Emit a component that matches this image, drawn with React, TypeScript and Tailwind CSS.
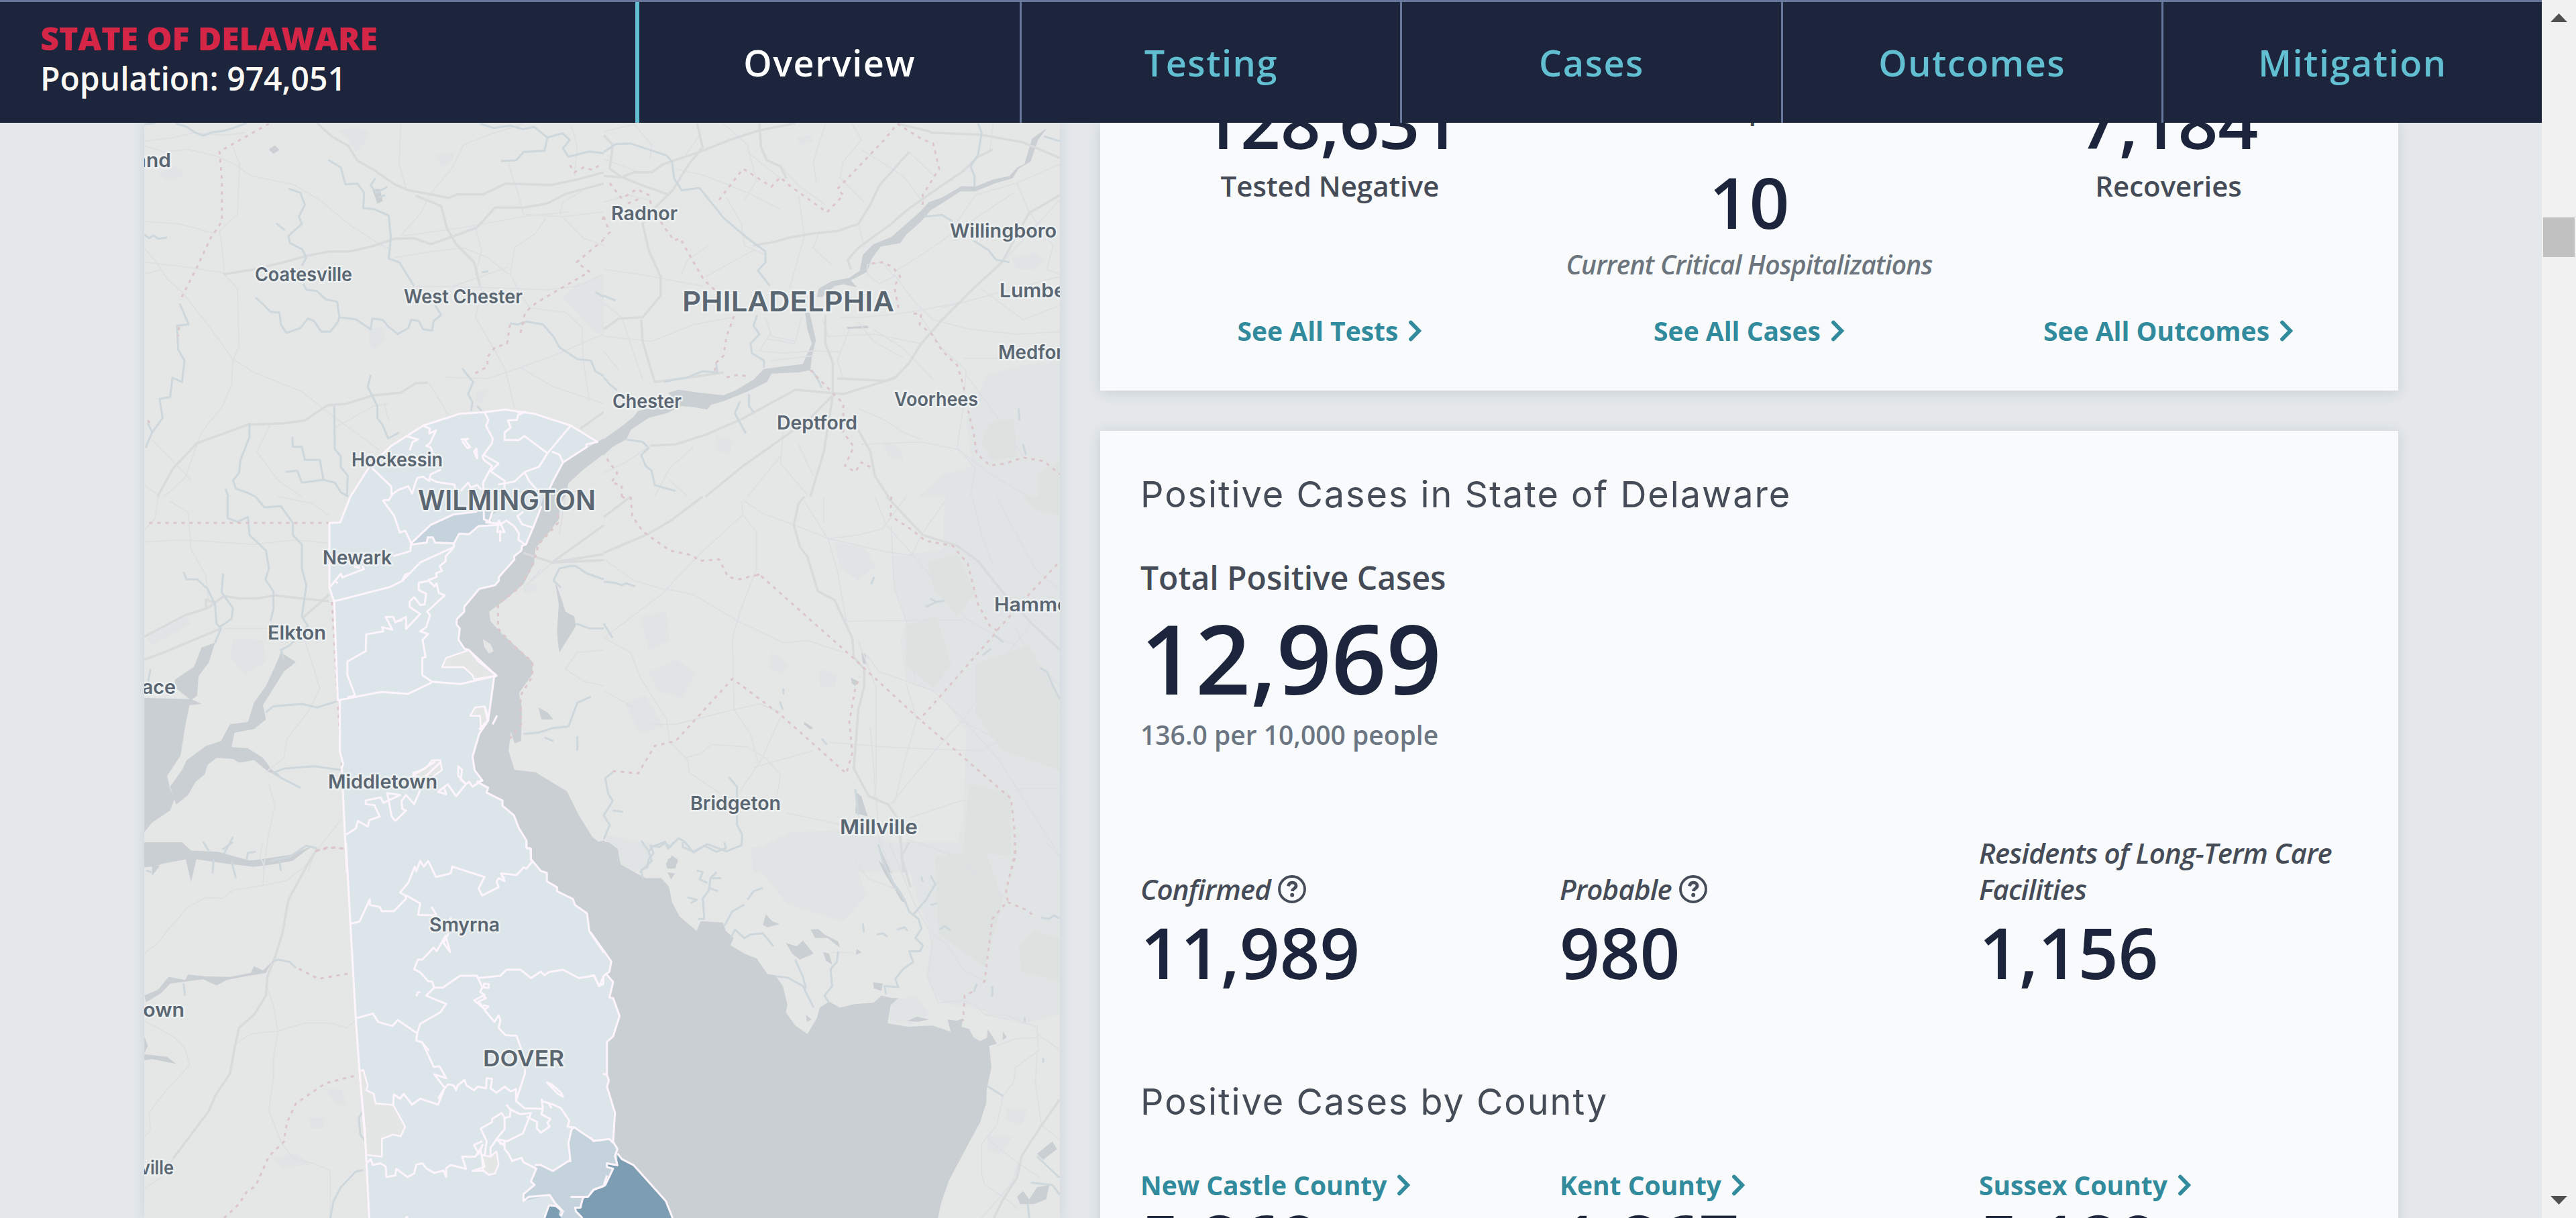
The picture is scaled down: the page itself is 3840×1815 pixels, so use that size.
import React from "react";

type Tile = "A" | "B" | "C" | "D" | "E" | "F";
type Shapes = Partial<Record<Tile, string[]>>;

/* The map is drawn in six tiles, each with its own grid of 1568 units. */
const TILES: Record<Tile, string> = {
  A: "translate(200 180) scale(0.446429 0.357143)",
  B: "translate(900 180) scale(0.446429 0.357143)",
  C: "translate(200 740) scale(0.446429 0.357143)",
  D: "translate(900 740) scale(0.446429 0.357143)",
  E: "translate(200 1255) scale(0.446429 0.357143)",
  F: "translate(880 1255) scale(0.459184 0.357143)",
};

const PARKS: Shapes = {
  A: [
    "M85 215 130 190 165 210 155 235 120 255 90 235Z",
    "M680 40 740 25 785 50 770 90 740 130 715 80Z",
    "M1430 740 1480 680 1568 650 1568 900 1520 860 1480 800Z",
    "M785 870 830 860 840 910 800 955 785 930Z",
    "M1010 140 1070 130 1065 165 1025 190Z",
    "M1140 1130 1180 1120 1165 1170 1140 1180Z",
  ],
  B: [
    "M1280 1060 1400 1020 1523 1000 1523 1568 1050 1568 1130 1480 1230 1440 1210 1250Z",
    "M1360 570 1440 550 1480 580 1440 620 1380 620Z",
    "M640 70 690 60 700 90 660 100Z",
    "M930 1340 990 1360 1000 1420 950 1400Z",
    "M370 1310 430 1330 420 1390 380 1380Z",
  ],
  C: [
    "M330 590 430 600 440 690 370 740 320 670Z",
    "M40 590 170 500 190 530 60 620Z",
    "M1300 370 1350 360 1340 400 1300 400Z",
  ],
  D: [
    "M1140 0 1523 0 1523 1568 1150 1568 1200 1350 1210 980 1120 820 1010 770 990 600 1010 520 970 390 960 250 1130 220Z",
    "M770 190 870 210 910 290 850 350 790 300Z",
    "M120 500 210 480 220 600 150 640Z",
    "M150 730 240 680 310 730 260 840 180 810Z",
    "M70 860 140 830 200 960 120 990Z",
    "M490 1480 620 1400 820 1390 1000 1450 1130 1500 1180 1568 500 1568Z",
    "M0 1410 120 1440 150 1480 110 1568 40 1568Z",
    "M560 650 620 700 600 740 550 720Z",
    "M720 720 780 740 770 800 720 790Z",
  ],
  E: [
    "M580 1150 640 1150 630 1195 590 1195Z",
    "M460 1320 540 1300 590 1345 500 1360Z",
    "M640 1030 690 1030 710 1100 670 1090Z",
  ],
  F: [
    "M520 20 720 0 860 100 900 220 820 330 640 260 560 130Z",
    "M1010 0 1523 0 1523 720 1400 760 1270 700 1140 670 1090 560 1110 400 1060 230Z",
    "M980 660 1060 640 1100 720 1040 760 970 745Z",
    "M60 0 200 0 180 110 100 110Z",
    "M1350 1110 1420 1110 1400 1180 1350 1160Z",
    "M1290 1220 1370 1230 1330 1300 1290 1290Z",
  ],
};

const DEEP_PARKS: Shapes = {
  B: ["M1290 1260 1370 1240 1380 1400 1300 1420 1260 1340Z", "M1450 1470 1523 1420 1523 1568 1450 1568Z"],
  D: [
    "M1400 0 1523 0 1523 80 1450 60Z",
    "M1010 540 1110 500 1160 700 1100 800 1010 700Z",
    "M1240 700 1420 620 1523 850 1523 1140 1330 1060 1240 900Z",
    "M1220 1200 1360 1240 1360 1500 1200 1480Z",
    "M1080 270 1180 240 1240 400 1180 500 1100 380Z",
  ],
  F: ["M1120 60 1280 30 1340 240 1280 520 1130 380Z", "M1390 430 1440 370 1523 400 1523 580 1400 540Z"],
};

const WATER: Shapes = {
  A: [
    "M1568 1325 1547 1340 1432 1425 1402 1495 1380 1568 1440 1568 1450 1512 1500 1455 1568 1390Z",
    "M450 120 470 102 485 122 465 138Z",
    "M795 285 820 285 830 335 812 345Z",
  ],
  B: [
    "M-2 1330 60 1275 100 1235 115 1210 200 1185 240 1165 215 1135 250 1122 320 1135 400 1145 440 1125 500 1080 535 1035 600 1025 665 1015 675 985 695 930 680 870 672 800 688 800 708 915 695 985 690 1040 650 1050 560 1055 545 1090 480 1130 400 1170 358 1185 345 1205 300 1195 260 1190 210 1220 150 1240 90 1290 75 1330 30 1360 -2 1397Z",
    "M712 735 718 700 760 670 820 655 855 625 865 560 900 515 960 485 1060 375 1085 340 1130 320 1195 272 1240 275 1300 245 1355 230 1380 195 1405 180 1430 75 1480 30 1450 80 1425 170 1385 200 1365 240 1310 260 1240 295 1190 295 1160 320 1090 375 1060 420 1010 475 990 510 925 525 895 575 880 630 825 665 845 695 800 682 770 690 730 735Z",
    "M810 860 880 855 885 865 815 868Z",
  ],
  C: [
    "M1300 -2 1440 -2 1420 40 1420 90 1385 150 1340 215 1335 280 1300 365 1240 430 1185 480 1190 520 1230 575 1270 620 1330 690 1330 740 1285 820 1295 880 1292 1020 1270 1030 1258 980 1250 1060 1270 1140 1340 1150 1445 1230 1485 1330 1530 1420 1550 1440 1570 1435 1570 1570 1300 1570 1050 1200 1000 600Z",
    "M34 840 190 845 225 865 185 870 170 960 155 1080 110 1165 120 1220 135 1260 120 1310 60 1360 34 1400Z",
    "M135 765 200 710 225 630 270 610 250 690 215 750 210 830 190 850 140 800Z",
    "M490 650 540 690 500 730 470 790 430 870 440 930 400 970 335 985 325 1045 380 1050 430 1090 460 1140 490 1165 450 1150 400 1100 350 1110 330 1095 275 1090 245 1120 235 1160 205 1190 180 1245 140 1285 120 1210 160 1140 175 1100 240 1040 290 1020 320 950 380 940 400 860 440 790 470 710Z",
    "M1405 350 1425 420 1440 480 1470 500 1475 540 1450 590 1420 650 1415 610 1412 560 1418 450Z",
    "M34 1445 160 1445 190 1480 280 1500 380 1520 440 1510 520 1495 600 1455 570 1480 530 1520 460 1535 400 1545 300 1530 190 1510 100 1530 34 1545Z",
    "M1350 880 1380 900 1400 930 1360 930Z",
  ],
  D: [
    "M-2 1435 30 1460 50 1500 60 1550 80 1570 -2 1570Z",
    "M845 1235 860 1250 882 1335 840 1320Z",
    "M215 1510 245 1510 240 1550 210 1545Z",
    "M860 650 875 660 875 700 865 695Z",
    "M670 940 700 965 690 972 668 950Z",
    "M920 1460 945 1530 965 1570 940 1570Z",
    "M825 755 848 770 840 790 828 780Z",
  ],
  E: [
    "M1200 0 1570 0 1570 1570 1400 1570Z",
    "M34 0 160 0 190 35 280 40 380 75 450 80 400 98 290 75 205 60 150 60 75 100 34 104Z",
    "M60 95 85 100 60 140Z",
    "M170 60 210 60 190 165Z",
    "M34 640 80 615 115 562 170 575 180 552 240 560 320 562 390 545 400 518 430 535 460 500 440 545 370 560 310 575 275 598 230 572 120 590 90 630 40 668Z",
    "M34 810 46 850 34 880Z",
    "M34 885 110 895 140 925 60 905 34 910Z",
  ],
  F: [
    "M-2 -2 60 0 90 30 95 90 150 130 180 150 230 150 255 185 265 250 290 310 345 370 358 330 430 335 440 370 465 400 455 430 500 465 540 485 575 550 600 555 625 600 640 680 635 710 665 765 705 800 735 735 745 690 775 665 810 690 860 675 920 670 945 640 980 650 1000 650 975 680 965 755 1030 770 1110 765 1170 790 1160 740 1190 745 1210 735 1205 770 1230 780 1245 815 1265 830 1288 815 1290 780 1320 840 1295 850 1302 940 1287 1030 1285 1090 1265 1170 1210 1300 1165 1410 1140 1500 1128 1570 -2 1570Z",
    "M245 90 265 55 285 75 275 110 250 110Z",
    "M250 125 275 130 262 155Z",
    "M560 345 570 300 590 330 615 342 575 355Z",
    "M635 420 670 435 690 410 725 465 680 490 655 465Z",
    "M715 365 740 362 760 385 805 415 810 440 770 400 730 400Z",
    "M755 458 775 465 785 510 765 495Z",
    "M918 585 950 590 945 620 920 610Z",
    "M935 75 965 110 985 165 1010 210 1030 260 1010 245 980 180 955 130Z",
    "M1450 1300 1500 1248 1515 1280 1470 1325Z",
    "M1385 1480 1405 1455 1425 1490 1450 1440 1490 1430 1480 1490 1440 1510 1395 1510Z",
    "M1340 790 1352 815 1338 825Z",
    "M865 445 880 460 862 470Z",
    "M700 720 718 740 703 750Z",
    "M1030 745 1060 728 1100 740 1060 750Z",
  ],
};

const RIVERS: Shapes = {
  A: [
    "M34 15 70 10M140 12 175 25 205 50 230 62 260 48 300 42 330 30 375 10",
    "M515 283 555 300 570 350 550 400 560 430 515 480 520 510 560 535 575 570 560 605",
    "M648 163 690 195 705 265 745 262 768 300 765 365 800 368 850 395 857 490 850 575 885 590 910 640 935 690",
    "M805 240 790 270 810 300 845 275M815 320 838 310",
    "M475 428 503 457M34 475 50 490 65 478 80 492 110 487",
    "M405 737 430 765 455 797 485 800 490 850 508 885 555 865 580 825 600 835 625 880 655 880 680 840 685 820 740 828 790 870 795 825 830 830 850 860 880 890 915 865 925 830 950 835 965 870 995 875 1000 835 1025 810 1005 770",
    "M565 680 575 705 610 710 640 745 678 755 685 820",
    "M152 763 182 850 143 855 147 955 168 1000 160 1090 128 1072 120 1153 85 1160 95 1240 60 1300 45 1260M60 1300 38 1365",
    "M385 1260 385 1320 355 1415 350 1470 330 1500 340 1535 375 1550 405 1568",
    "M528 1320 530 1360 560 1360 570 1415 620 1415 632 1498 560 1510 545 1460 505 1465M632 1498 670 1510 690 1550 715 1568",
    "M668 1190 670 1370 690 1400 690 1445 713 1480 710 1568",
    "M790 1060 780 1110 812 1190 812 1240 830 1270 848 1325 885 1300",
    "M1095 1033 1132 1090 1115 1140 1130 1175 1125 1210M1145 1190 1160 1210",
    "M1255 845 1280 850 1310 838 1365 850 1400 900 1420 945 1480 995 1525 1000 1540 1045 1568 1065",
    "M1155 12 1200 30 1255 20 1300 35 1335 25 1380 70 1430 52 1455 80 1432 115 1450 150 1520 128 1568 135M1380 70 1370 125 1300 130 1275 165 1225 168",
    "M305 1535 315 1568M1540 715 1568 735M1160 632 1182 628",
  ],
  B: [
    "M0 130 40 97 90 95 150 120 210 145 228 170 235 240 260 290 320 280",
    "M320 280 400 405 480 490 540 545 540 590 515 625 555 690",
    "M512 810 500 855 520 890 490 930 495 970 535 1000 535 1030",
    "M1250 12 1262 50 1250 140 1225 190 1238 230 1238 275",
    "M1070 400 1130 393 1165 420M1235 500 1285 540 1310 580 1355 590",
    "M0 1070 20 1100 45 1125M75 1330 130 1340 150 1365 125 1395 140 1440 160 1460 170 1520 240 1545",
    "M455 1170 438 1220 455 1260 475 1305M485 1140 485 1190 500 1215",
    "M1385 1200 1388 1250M0 730 40 750M1400 1350 1410 1395M375 1010 380 1050 330 1045 280 1070 200 1090",
    "M695 1040 715 1080 728 1115M1470 65 1523 85",
  ],
  C: [
    "M312 0 312 90 345 105 380 85 385 160 440 225 450 300 438 345 465 395 465 470 455 520",
    "M405 0 435 45 490 40 530 110 530 160 560 200 560 300 575 370 560 500 580 540 520 620 490 640 500 680",
    "M165 315 175 345 210 345 245 385 270 450 275 530 290 550 270 610M297 320 292 400 330 465 325 510 285 545",
    "M55 720 45 780M440 900 465 875 560 865 610 880 675 855M470 1150 500 1135 600 1125 690 1140M460 1150 500 1180 555 1215",
    "M1455 290 1475 290 1510 320 1568 345M1455 290 1420 300 1400 350 1425 380M1475 530 1520 550 1568 550",
    "M1450 960 1480 860 1525 835M1300 990 1350 985 1400 965 1450 960M1370 1005 1400 1020M1480 1000 1480 1060M230 1440 250 1480M330 1420 300 1490M40 1560 60 1568",
  ],
  D: [
    "M0 355 40 360 60 370 75 362 105 375M0 530 30 590M1458 715 1480 730 1500 790 1523 845",
    "M1075 460 1110 440 1090 425M1110 440 1138 435M1300 575 1335 608M1265 662 1293 635M903 335 893 365",
    "M600 800 600 825M588 855 598 890M728 1010 745 1035M417 1170 445 1210 445 1370 462 1410 460 1455 410 1480 345 1450 300 1485 270 1440 250 1425 215 1470 205 1440 165 1460 150 1480 125 1435",
    "M150 1480 160 1520 120 1568M30 1150 5 1175 15 1240 30 1270 0 1330 20 1370 0 1430M30 1310 65 1315M840 1220 850 1330",
  ],
  E: [
    "M450 80 520 60 575 15 610 25M265 70 262 130M325 80 340 150M485 80 490 120M375 75 380 45 405 40M295 30 330 0M460 500 480 490 520 500 540 525",
    "M165 590 170 640M770 1070 770 1105 800 1100M770 1110 750 1150 755 1220 790 1275M765 1368 740 1375 690 1440 665 1500 655 1568",
  ],
  F: [
    "M300 0 300 20 335 40 370 15 410 40 440 25 435 0M270 0 260 18 240 5 225 20 195 15 205 45 190 70 185 105 165 115 170 150",
    "M345 118 365 125 355 155 380 170M410 125 390 150 385 200 365 235 370 320 350 320M390 150 425 150M385 190 415 205M315 230 345 240 325 255",
    "M435 350 460 290 500 260M510 240 530 205 560 190M455 400 470 365 500 400 520 385 560 380 595 435",
    "M935 10 950 80 985 175 1020 240 1035 290 1065 320 1075 360 1055 400 1080 430 1070 455 1035 455 1048 500 1015 530 990 570 1000 605 955 600 960 635",
    "M1050 300 1090 240 1120 175 1105 140M995 365 1020 355 1030 370M1133 365 1150 350 1170 368M1462 315 1490 320 1505 305 1523 318M930 385 950 380 965 395M885 340 888 375",
    "M600 560 640 565 690 600 705 640 725 690M665 490 690 560 700 610M805 455 800 500 780 530 785 600 760 640 775 670",
    "M1255 590 1245 625M1305 600 1305 645M1410 730 1410 750M1470 900 1470 920M1450 1310 1490 1360 1523 1400M1430 1420 1500 1430 1523 1470M1420 1510 1425 1568M1290 1018 1340 1060",
    "M1075 145 1080 165M1105 262 1125 255",
  ],
};

const ROADS: Shapes = {
  A: [
    "M610 8 660 65 715 105 745 165 800 205 870 265 915 290 1005 310 1050 322 1080 307 1165 307 1240 262 1390 268 1480 245 1568 215",
    "M300 640 400 620 500 590 570 565 655 545 720 545 790 525 870 492 935 490 990 515 1060 485 1145 445 1205 362 1300 362 1380 345 1440 305 1568 262",
    "M940 312 1025 355 1045 450 1075 515 1135 590 1155 690",
    "M78 1568 130 1450 210 1345 380 1268 500 1262 570 1250 645 1187 710 1180 800 1145 890 1135 940 1095 980 1093",
    "M1568 1215 1490 1285",
  ],
  B: [
    "M0 230 60 235 100 215 160 215 200 180 320 130 420 80 520 40 640 10M312 12 330 110 285 180 230 290 165 370 130 430 150 540 190 650 190 730 130 820 50 825 0 870",
    "M520 12 525 110 545 165 590 190 610 240M1090 50 1260 58 1400 90 1523 155M980 12 1090 45M1300 120 1250 150 1200 210 1100 295 1010 375 960 430 850 530 815 580 825 620",
    "M500 520 570 505 620 487 700 470 780 460 850 430 890 350 920 270 1020 130",
    "M1523 310 1420 385 1330 590 1230 705 1130 830 1060 930 1020 1010 970 1075 800 1140 640 1122 460 1245 340 1310 240 1350 155 1355",
    "M340 1568 460 1445 590 1330 690 1240 765 1145M125 830 130 920 170 1090 290 1070 400 1050M850 1290 890 1380 905 1480 950 1568M740 810 740 930 765 1010 765 1140",
    "M765 1145 735 1380 690 1568M0 60 30 100 20 200 60 235 130 270 220 310M780 1075 860 1080 940 1085 980 1065",
  ],
  C: [
    "M34 585 170 495 245 465 300 415 350 425 410 425 470 412 560 425 650 437",
    "M240 465 240 430 275 445M34 680 100 650 290 550M1300 235 1395 275 1568 120M1395 275 1568 240M1395 275 1568 265M560 510 650 410",
  ],
  D: [
    "M0 235 150 155 230 95 330 0M0 85 90 0M670 0 650 30 635 120 655 210 680 250 715 395 770 430 830 590 835 670 870 720 870 790 850 890 835 1135 885 1250 950 1285 985 1350 1000 1568",
    "M945 0 1065 160 1180 205 1250 270 1330 395 1430 530 1523 640",
  ],
  E: ["M610 30 580 90 515 240 495 380 470 480 445 560 440 640 400 720 350 775 335 860 320 965 270 1060 250 1120 130 1320"],
  F: ["M1035 0 1010 60 1040 190M1523 1075 1460 1190 1400 1310 1385 1400 1340 1490 1310 1568"],
};

const LANES: Shapes = {
  A: [
    "M34 85 130 70 200 50 300 60 370 50M34 105 100 130 180 120 270 145 340 185 390 230 530 265 620 330 720 435 820 515 860 540",
    "M330 110 352 180 345 390 285 460 295 540 300 640 345 700 350 940 330 1000 325 1100 295 1190 225 1300 190 1420 170 1490 100 1568",
    "M34 420 150 430 270 470M34 530 80 600 110 660 160 715 240 840 330 995 400 1050 560 1130 640 1210 750 1310 820 1375",
    "M34 590 160 607 300 635M34 640 90 620M890 12 885 180 910 290M1300 12 1180 60 1100 100 1060 200 985 310 960 380 890 480",
    "M1275 270 1300 390 1430 400 1568 380M1250 180 1275 280M1375 405 1340 470 1270 530 1255 640 1290 720 1320 780 1440 800 1495 860 1500 1000 1520 1170",
    "M870 570 1000 545 1100 530 1180 570 1250 640M900 480 1100 445 1300 400 1450 380M1140 450 1160 540 1140 640 1160 700 1140 820 1200 950 1240 1040 1270 1200",
    "M940 690 1150 695 1380 705 1480 690 1568 640M1065 690 1250 610M1040 1070 1180 1075 1290 1030 1420 970 1568 890M1290 1030 1400 1110 1568 1180",
    "M985 1095 1050 1230M455 1265 410 1380 480 1500 560 1568M670 1280 800 1190 850 1180M60 1330 190 1500M34 1520 80 1560M835 1180 850 1250M1470 230 1480 110 1460 20M1420 400 1430 340 1500 290M1430 400 1500 490 1568 520",
  ],
  B: [
    "M100 12 160 100 155 160M0 160 110 210M0 45 110 12M240 200 340 230 480 300 590 370M270 150 320 60M740 12 700 170 710 260M590 190 650 270 740 350M830 12 860 80 800 170 790 240 870 340",
    "M860 120 1000 230 1060 330M1020 130 1110 240M1300 12 1290 120M1523 180 1380 260 1240 310 1170 440M1523 330 1330 590",
    "M970 630 1060 560 1200 440 1370 300M880 640 920 680 970 650 930 590 880 600 880 640M970 640 1040 760 1100 830 1220 870 1380 890 1523 880",
    "M1060 820 1130 950 1210 1040 1200 1200 1180 1360 1240 1450 1225 1568M1200 990 1523 992M1380 260 1420 380 1500 520 1480 620 1523 640M1130 780 1523 650M1523 770 1400 830 1260 700",
    "M0 620 120 640 200 660 330 690M340 650 500 540M260 640 280 580 350 520M540 820 560 900 640 920 660 820M545 910 640 930M560 880 520 960 600 970 700 960 790 965",
    "M730 830 750 900 900 890 1060 930M790 820 860 820 1020 800 1180 760M900 870 1000 950 1100 1080M560 1000 700 980M820 870 780 1000 800 1080",
    "M0 760 60 820 130 1080M0 900 160 920 300 850 430 820M0 960 50 1040M590 1400 480 1568M650 1350 700 1480M170 1568 220 1450 300 1360M600 1290 590 1430 680 1560M220 1500 280 1568",
    "M860 1350 1060 1340 1180 1370 1300 1480 1420 1568M850 1200 940 1250 1000 1300 1060 1330M0 1470 80 1420 150 1360M410 320 460 430 470 520 540 560M650 310 670 480 620 700M480 130 600 250M0 340 80 310 150 330",
    "M400 12 480 100 510 250 470 330M720 460 700 530 760 600M850 430 870 530M1210 1060 1310 1230 1400 1400M1000 990 900 920 850 840",
  ],
  C: [
    "M80 0 70 90 34 140M34 190 160 180 400 200 540 180 650 195M120 20 180 65 190 220 240 330 250 450M480 0 600 30 650 80",
    "M300 550 430 550 560 560 620 800 580 900 510 1010 500 1090 440 1150M430 1568 450 1400 470 1290 450 1200M610 1475 690 1350M1395 275 1310 370 1360 300M1420 160 1440 0M1568 640 1480 650 1440 720 1500 770 1568 790M580 1568 600 1490",
  ],
  D: [
    "M0 260 100 350 210 390 190 410 0 590M210 385 320 240 465 75 460 20M465 75 510 150 510 300 455 480 430 590 435 890 490 990 515 1110",
    "M465 15 530 70 640 120 750 175 850 160 930 135 1010 0M750 175 940 230 1030 245M670 20 750 180 780 310 810 520 1200 515M735 0 735 110",
    "M210 385 300 410 450 520 600 610 680 600 800 650M0 590 90 650 120 750 210 930 220 1020 280 1100 285 1150 390 1240M0 810 100 880",
    "M160 950 240 950 430 890 520 865 590 900M270 1090 320 1075 360 1035 480 1045 540 1090 590 1160 580 1240M590 920 530 1090 455 1230M500 1130 700 1060M750 1025 940 1045 1120 1055 1260 1060 1523 890",
    "M905 0 945 120 1030 240 1210 510 1370 620 1523 790M1150 0 1060 160 1030 240M1230 0 1260 150 1300 290M1310 0 1440 300 1523 390M960 120 970 380 1010 520 1040 760M870 650 920 730 1100 810 1200 930 1320 1100 1523 1500",
    "M1430 530 1370 620 1200 930 1120 1040 960 1280M1010 780 1045 930 1010 1080 970 1280M850 600 910 800 910 1200 900 1270M610 1320 800 1370M1020 1340 1190 1270 1310 1260M1200 940 1523 1140M1370 540 1500 830M1010 1430 1150 1490 1250 1568M1380 1220 1523 1220M890 960 920 1430 960 1568",
  ],
  E: [
    "M34 465 80 420 110 370 180 270 240 230 295 235 330 200 430 180 510 160 580 90M430 0 420 60 435 100 430 180M445 610 465 680 480 790 465 900 465 980 450 1120 490 1250 530 1320 600 1340 655 1370 655 1568",
    "M340 840 390 800 480 788 570 755 660 755 710 775 740 740M34 745 130 810 170 860 185 930 90 1060 50 1130 55 1200 34 1230M34 1445 90 1400 130 1320",
  ],
  F: [
    "M970 0 1050 250 1100 370 1110 430 1095 560 1130 670M1070 0 1180 60 1350 235M1110 380 1160 430 1210 530 1280 580M1130 670 1210 660 1250 680 1280 720 1350 720 1400 750 1450 770 1455 870 1380 940 1375 1000 1340 1060 1320 1180 1270 1260 1270 1380 1280 1430 1340 1480 1390 1530",
    "M1450 800 1523 865M1450 870 1445 1010 1465 1180 1523 1240M1290 1240 1390 1340 1370 1420 1270 1568M1390 1340 1460 1400M1480 0 1523 60M860 80 900 150 1000 200M1320 850 1380 820 1450 815M1280 720 1360 740M780 460 850 460",
  ],
};

const BORDERS: Shapes = {
  A: [
    "M450 12 285 128 293 250 293 420 255 490 210 610 155 745",
    "M1568 495 1478 590 1520 630 1430 695 1340 762 1305 800 1300 835 1290 885M1255 850 1245 930 1205 945 1180 985 1180 1025 1130 1060",
    "M1455 185 1470 215 1500 195 1530 205 1560 180M1568 400 1560 420M150 860 147 900M45 1250 60 1270",
  ],
  B: [
    "M20 260 60 325 110 285 150 310 160 360 200 440 235 500 255 490 300 590 335 665 370 705M80 345 130 320M0 400 20 465 0 490",
    "M385 330 465 200 560 275 590 235 620 270 745 382 800 310 780 285 940 75 980 12 1060 75 1100 95 1120 200 1065 310 1065 350",
    "M435 815 410 900 400 980 375 1010 370 1050M410 1070 450 1060 490 1068M895 595 930 590 965 610 990 650 970 690 985 790M1035 805 1060 805 1055 850 1095 890 1130 960 1180 1020 1200 1100 1215 1200 1235 1300 1245 1390 1290 1438 1340 1430 1400 1405 1470 1420 1523 1475",
    "M690 1040 760 1130 800 1180 800 1300 835 1360 805 1440 840 1465 860 1425 890 1445M10 1410 45 1470 25 1510 60 1520 60 1568",
  ],
  C: ["M50 110 652 110M660 440 680 860 700 1250 710 1568M1415 40 1415 110 1350 200 1330 290 1285 380 1215 450 1215 550 1265 620 1330 690 1330 750 1290 830 1292 950 1255 1010M605 1480 650 1465 705 1468"],
  D: [
    "M90 0 95 80 130 145 220 225 295 245 320 268 385 262 415 335 450 345 520 325 830 670 1055 930 1360 1260 1372 1400 1375 1500 1358 1568M520 325 500 330",
    "M30 1145 115 1155 170 1040 240 1020 430 760 590 910 810 1155 830 1070 820 940 840 800 855 750M960 0 958 80 1030 140 1075 185 1165 205 1215 280 1250 450 1290 540 1315 560 1055 930M1315 555 1370 480M1415 415 1523 270M60 0 70 5",
  ],
  E: ["M610 35 650 20 705 28M550 528 615 570 730 545M300 1568 350 1510 375 1460 405 1435 450 1310 500 1250 510 1170 540 1090 640 1005 745 972M752 960 770 1200 785 1568"],
  F: ["M1378 0 1378 50 1350 200 1355 245 1305 320 1280 580 1265 600M1355 250 1420 285 1445 315M1240 625 1215 640 1210 745"],
};

const STATE: Shapes = {
  A: ["M722 1570 782 1450 830 1390 860 1355 965 1272 1088 1222 1170 1216 1238 1205 1335 1222 1458 1272 1547 1340 1510 1362 1432 1425 1402 1495 1385 1540 1368 1570Z"],
  C: ["M724 -4 688 108 652 110 652 380 668 440 680 850 687 852 687 1065 698 1115 693 1130 710 1570 1325 1570 1325 1470 1310 1465 1310 1435 1285 1385 1268 1330 1230 1290 1230 1268 1177 1235 1182 1215 1145 1190 1163 1185 1137 1142 1130 1085 1152 990 1182 935 1202 752 1210 747 1152 690 1118 640 1103 635 1083 597 1087 550 1077 535 1077 512 1102 480 1102 460 1152 385 1205 370 1218 350 1218 335 1270 262 1268 250 1293 225 1295 205 1308 200 1332 130 1355 50 1368 -4Z"],
  E: ["M706 -4 722 340 740 735 752 950 770 1200 785 1570 1570 1570 1570 460 1520 372 1512 297 1472 262 1465 237 1412 205 1412 188 1378 163 1378 128 1358 120 1330 78 1323 25 1310 25 1310 -4Z"],
  F: ["M-2 372 68 497 62 540 52 550 74 583 62 648 74 650 95 725 74 810 54 833 54 970 60 995 54 1020 80 1130 74 1250 88 1300 80 1400 -2 1500Z"],
};

const MEDIUM: Shapes = {
  C: ["M925 195 990 118 1065 75 1145 62 1215 60 1190 80 1195 105 1212 118 1150 123 1118 157 1085 157 1068 195 1005 192 997 170 980 170 977 190 925 200Z"],
  E: ["M1470 1187 1535 1245 1570 1242 1570 1435 1535 1450 1515 1480 1498 1482 1490 1525 1472 1530 1497 1570 1428 1570 1425 1560 1432 1540 1387 1472 1300 1497 1300 1468 1337 1430 1325 1415 1343 1362 1338 1347 1362 1347 1398 1372 1458 1325 1450 1255 1460 1200Z"],
  F: ["M-2 1230 10 1247 62 1238 74 1255 88 1280 88 1348 54 1340 54 1355 74 1362 48 1432 10 1450 -2 1465Z"],
};

const DARK: Shapes = {
  E: ["M1570 1433 1535 1450 1500 1490 1490 1525 1472 1530 1497 1570 1570 1570Z", "M1385 1515 1408 1518 1422 1535 1418 1555 1428 1570 1370 1570Z"],
  F: ["M88 1300 102 1322 140 1347 245 1497 267 1570 -2 1570 -2 1465 10 1450 48 1432 74 1362 54 1355 54 1340 88 1348Z"],
};

const HOLES: Shapes = {
  C: [
    "M1118 640 1210 747 1135 762 1130 745 1100 712 1028 712 1042 673Z",
    "M1138 880 1170 875 1180 935 1158 970 1155 915 1122 915Z",
    "M995 1100 1022 1100 1028 1140 985 1180 932 1165 932 1153 972 1135Z",
  ],
  E: [
    "M752 955 765 950 780 1015 775 1035 800 1050 806 1090 865 1096 905 1187 890 1227 865 1220 827 1238 827 1312 775 1305Z",
    "M1160 1305 1190 1312 1210 1290 1217 1345 1205 1382 1185 1388 1165 1370Z",
  ],
};

const ZONES: Shapes = {
  A: [
    "M722 1568 782 1450 830 1390 860 1355 965 1272 1088 1222 1170 1216 1238 1205 1335 1222 1458 1272 1547 1340 1510 1350 1510 1362 1432 1425 1402 1495 1385 1540",
    "M965 1272 988 1285 985 1305 1008 1292 988 1345 975 1357 990 1362 1000 1395",
    "M1170 1216 1183 1248 1175 1273 1197 1325 1195 1345 1163 1400 1168 1415 1195 1440 1183 1468 1165 1510 1168 1568",
    "M1278 1217 1305 1215 1282 1228 1278 1248 1248 1250 1257 1280 1237 1300 1237 1332 1285 1332 1303 1315 1380 1387 1352 1443 1305 1465 1270 1505 1215 1518",
    "M1458 1272 1405 1350 1380 1387M1395 1380 1420 1393 1432 1425M1168 1395 1217 1430 1190 1462 1238 1503 1235 1545M1303 1465 1320 1505 1345 1540",
    "M795 1450 858 1525 860 1568M860 1560 882 1540 915 1525 928 1555 945 1490 965 1485 985 1503 990 1475 1025 1455M990 1495 1010 1507 1070 1518 1072 1555",
    "M908 1315 948 1330 930 1340 920 1375M1090 1330 1115 1327 1105 1335 1122 1362 1112 1365 1095 1335M1135 1380 1143 1368 1145 1408ZM1090 1545 1115 1510 1125 1530 1145 1520 1160 1540",
  ],
  C: [
    "M722 0 688 108 652 110 652 380 668 440 680 850 687 852 687 1065 698 1115 693 1130 710 1568",
    "M1360 40 1332 130 1308 200 1295 205 1293 225 1268 250 1270 262 1218 335 1218 350 1205 370 1152 385 1102 460 1102 480 1077 512 1077 535 1087 550 1083 597 1103 635 1118 640 1152 690 1210 747 1202 752 1182 935 1152 990 1130 1085 1137 1142 1163 1185 1145 1190 1182 1215 1177 1235 1230 1268 1230 1290 1268 1330 1285 1385 1310 1435 1310 1465 1325 1470 1325 1520",
    "M830 15 850 15 858 0M830 15 868 80 887 150 905 142 925 195 922 228 865 248",
    "M925 195 990 118 1065 75 1145 62M925 200 977 192 980 170 997 170 1005 192 1068 195 1068 210 955 275 895 352 855 377 668 437",
    "M1068 195 1085 155 1118 157 1150 123 1212 118 1218 100 1237 148 1212 148 1218 100M1222 140 1222 188M1167 55 1168 95 1190 105 1175 108 1212 112",
    "M1218 120 1243 100 1270 125 1285 155 1283 180 1305 200M1300 62 1280 82 1295 115 1332 130M1197 60 1185 105",
    "M652 380 690 322 695 337 767 303 762 288M735 292 755 298M670 350 680 362",
    "M1065 215 1040 250 1040 270 1020 290 1028 310 1008 320 1010 335 980 350M895 350 905 325 918 320",
    "M980 347 1003 375 1010 362 1017 402 1037 412 978 480 988 495 975 545 955 562 982 573 963 598 973 670 962 672 962 745 992 770 990 778 915 823 825 815 680 850M712 838 738 830 712 745 712 688 773 645 775 575 832 562 828 545 862 555 840 502 865 502 872 525 908 502 908 552 955 490 920 460 920 438 935 420 955 452 970 450 975 405 950 390 950 360 980 352",
    "M872 522 895 515M992 772 1090 782 1210 747M1182 920 1170 875M1152 972 1180 935M1212 913 1197 950",
    "M1160 1185 1130 1210 1118 1190 1108 1200 1082 1165 1082 1125 1095 1140 1090 1180 1108 1200 1075 1250 1047 1200 1015 1232 1042 1242 1035 1215M955 1225 935 1283 908 1245 893 1270 895 1303 908 1310 872 1353 860 1335 845 1237 888 1245 832 1278 823 1255 773 1268 773 1283 802 1287 820 1335 785 1350 780 1377 747 1353 740 1385 708 1410",
    "M932 1163 1005 1105M972 1168 1022 1110",
  ],
  E: [
    "M707 0 722 340 740 735 752 950 770 1200 785 1568",
    "M1310 0 1310 25 1323 25 1325 70 1330 78 1358 120 1378 128 1378 163 1412 188 1412 205 1465 237 1472 262 1512 297 1520 372 1568 460",
    "M722 340 752 332 787 238 787 262 820 270 827 288 867 288 908 235 905 222 888 210 915 170 937 102 942 122 955 78 967 102 982 78 1008 145 1057 130 1062 102 1170 145 1150 193 1162 222 1217 188 1210 165 1217 150 1237 162 1225 130 1277 137 1300 105 1310 110 1330 80M1225 140 1237 150",
    "M908 222 955 255 948 303 1010 305 993 270M1045 330 1060 315M1050 380 1033 420 1055 458 1040 390 1010 455 1000 440 962 490 947 490 935 530 955 543 982 580 995 582 1002 607 975 640 1042 675 1022 710 955 758 945 797 880 742 862 767 815 750 797 715 740 735",
    "M1002 607 1030 607 1088 557 1145 557 1147 567 1223 557 1243 532 1290 532 1325 567 1358 540 1370 555 1385 542 1432 532 1485 567 1535 557 1553 600 1568 560",
    "M1145 560 1163 605 1155 625 1170 637 1135 660 1170 697 1150 665 1175 650 1163 640M1165 680 1183 685 1170 700 1203 750 1217 722 1223 742 1217 775 1240 805 1277 808 1293 865M1305 945 1305 965 1285 1040 1275 1080 1303 1110 1365 1112",
    "M1168 590 1185 592 1183 608 1168 606ZM942 643 947 627 955 625",
    "M945 797 942 827 962 835 1000 937 1020 935 1042 985 1002 968 1037 1025 1015 1070M960 835 985 870",
    "M865 1096 867 1053 888 1070 900 1050 928 1095 955 1070 1015 1095 1035 1030 1048 1010 1067 1015 1075 1035 1080 1015 1103 992 1110 1015 1135 1035 1147 1020 1175 1027 1177 985 1195 987 1190 1027 1210 1045 1237 1020 1257 1040 1275 1030 1275 1080",
    "M1378 1002 1393 1010 1425 1045 1432 1062 1415 1050ZM1360 1070 1365 1110 1360 1135 1390 1155 1380 1170 1387 1187 1358 1212 1345 1195 1345 1167 1310 1145",
    "M1362 1080 1400 1095 1425 1110 1453 1162 1447 1187 1470 1190 1535 1245 1568 1242M1385 1090 1393 1110",
    "M1243 1095 1255 1115 1290 1135 1325 1130 1298 1215 1245 1248 1210 1238 1237 1197 1237 1150 1255 1145 1257 1110M1237 1150 1227 1130 1195 1155 1195 1168 1157 1195 1177 1247 1170 1310M1237 1250 1237 1280 1250 1300 1262 1330 1293 1317 1300 1335 1343 1362 1325 1415 1337 1430 1300 1468 1300 1497 1318 1480 1387 1472 1405 1505 1432 1540 1425 1560",
    "M1163 1247 1135 1263 1150 1300 1165 1260M1190 1312 1190 1275 1210 1240 1232 1262 1240 1245M1215 1240 1225 1262",
    "M775 1340 790 1322 797 1347 822 1340 840 1353 842 1397 872 1390 875 1363 913 1397 935 1382 942 1345 962 1340 977 1362 1002 1380 1033 1370 1042 1397 1042 1360 1057 1347 1108 1363 1095 1312 1140 1312 1155 1280 1170 1355 1130 1372 1165 1370 1185 1388",
    "M1470 1187 1460 1200 1450 1255 1457 1335M1362 1347 1338 1347M1358 1347 1398 1372 1457 1325M1568 1435 1535 1450 1515 1480 1457 1480M1498 1485 1490 1525 1472 1525 1475 1540 1497 1568M1370 1568 1385 1515 1408 1518 1430 1540M905 1568 915 1562",
  ],
  F: [
    "M0 375 68 497 62 540 52 550 74 583 62 648 74 650 95 725 74 810 54 833 54 970 60 995 54 1020 80 1130 74 1250 88 1280 80 1310 88 1348 54 1340 54 1355 74 1362 48 1432 10 1450 0 1465",
    "M52 548 42 560 42 592 28 600 12 555 0 557M40 968 54 968M0 1230 10 1247 62 1238 74 1255M88 1298 102 1322 140 1347 245 1497 267 1568M54 1390 44 1430",
  ],
};

const LABELS: { text: string; x: number; y: number; w: number; size: number; end?: boolean }[] = [
  { text: "land", x: 255, y: 249, w: 62, size: 28, end: true },
  { text: "Coatesville", x: 380, y: 419, w: 145, size: 28 },
  { text: "West Chester", x: 602, y: 452, w: 177, size: 28 },
  { text: "Hockessin", x: 524, y: 695, w: 136, size: 28 },
  { text: "PHILADELPHIA", x: 1017, y: 464, w: 316, size: 41 },
  { text: "Radnor", x: 911, y: 328, w: 99, size: 28 },
  { text: "Willingboro", x: 1416, y: 354, w: 159, size: 28 },
  { text: "Lumberton", x: 1490, y: 443, w: 158, size: 28 },
  { text: "Medford", x: 1488, y: 535, w: 114, size: 28 },
  { text: "Chester", x: 913, y: 608, w: 103, size: 28 },
  { text: "Voorhees", x: 1333, y: 605, w: 125, size: 28 },
  { text: "Deptford", x: 1158, y: 640, w: 120, size: 28 },
  { text: "WILMINGTON", x: 623, y: 760, w: 265, size: 41 },
  { text: "Newark", x: 481, y: 841, w: 103, size: 28 },
  { text: "Elkton", x: 399, y: 953, w: 87, size: 28 },
  { text: "Grace", x: 262, y: 1034, w: 83, size: 28, end: true },
  { text: "Middletown", x: 489, y: 1175, w: 163, size: 28 },
  { text: "Hammonton", x: 1482, y: 911, w: 178, size: 28 },
  { text: "Bridgeton", x: 1029, y: 1207, w: 135, size: 28 },
  { text: "Millville", x: 1252, y: 1243, w: 116, size: 30 },
  { text: "Smyrna", x: 640, y: 1388, w: 105, size: 28 },
  { text: "DOVER", x: 720, y: 1589, w: 121, size: 33 },
  { text: "town", x: 275, y: 1515, w: 72, size: 28, end: true },
  { text: "ville", x: 259, y: 1750, w: 50, size: 28, end: true },
];

function Layer({ shapes, ...style }: { shapes: Shapes } & React.SVGProps<SVGGElement>) {
  return (
    <g fill="none" strokeLinejoin="round" {...style}>
      {(Object.keys(shapes) as Tile[]).map((tile) => (
        <g key={tile} transform={TILES[tile]}>
          {shapes[tile]!.map((d) => (
            <path key={d} d={d} vectorEffect="non-scaling-stroke" />
          ))}
        </g>
      ))}
    </g>
  );
}

function DelawareMap() {
  return (
    <svg className="block h-full w-full bg-[#e5e7e6]" viewBox="215 183 1365 1632">
      <Layer shapes={PARKS} fill="#e0e4e4" />
      <Layer shapes={DEEP_PARKS} fill="#dde2e0" />
      <Layer shapes={WATER} fill="#cacfd3" />
      <Layer shapes={LANES} stroke="#dedfe2" strokeWidth={1.8} />
      <Layer shapes={ROADS} stroke="#d8dadc" strokeWidth={3.5} />
      <Layer shapes={RIVERS} stroke="#ced7dc" strokeWidth={3} />
      <Layer shapes={BORDERS} stroke="#dcc6ca" strokeWidth={3} strokeDasharray="5 7" />
      <g transform={TILES.C}>
        <path d="M1165 595 1190 615 1200 645 1185 655 1168 625Z" fill="#e5e7e6" />
      </g>
      <Layer shapes={STATE} fill="#dce5ea" />
      <Layer shapes={MEDIUM} fill="#c5d3dc" />
      <Layer shapes={DARK} fill="#7d9eb2" />
      <Layer shapes={HOLES} fill="#e4e6e5" stroke="#fdf5fb" strokeWidth={2.5} />
      <Layer shapes={ZONES} stroke="#fdf5fb" strokeWidth={3} />
      <g fill="#5a6672" stroke="#eef1f1" strokeWidth={5} strokeLinejoin="round" paintOrder="stroke" fontWeight={600} className="font-['Inter',sans-serif]">
        {LABELS.map((l) => (
          <text key={l.text + l.y} x={l.end ? l.x - l.w : l.x} y={l.y} fontSize={l.size} textLength={l.w} lengthAdjust="spacingAndGlyphs">
            {l.text}
          </text>
        ))}
      </g>
    </svg>
  );
}

function Link({ children }: { children: React.ReactNode }) {
  return (
    <a className="inline-flex items-center gap-[14px] text-[39px] leading-[60px] font-bold whitespace-nowrap text-[#318b9d]">
      {children}
      <svg className="h-[34px] w-[22px]" viewBox="0 0 22 34" fill="none" stroke="currentColor" strokeWidth={5.8} strokeLinecap="round">
        <path d="M5 4.5 17.2 17 5 29.5" strokeLinejoin="miter" />
      </svg>
    </a>
  );
}

function Help() {
  return (
    <svg className="ml-[11px] h-[42px] w-[42px] shrink-0" viewBox="0 0 42 42" fill="none" stroke="currentColor">
      <circle cx="21" cy="21" r="19" strokeWidth={3.8} />
      <path d="M15.5 16.5C16.3 12.8 19 11.2 21.5 11.2C24.8 11.2 27 13.4 27 16C27 19.8 21.8 19.8 21.3 24" strokeWidth={4.8} />
      <circle cx="21.2" cy="29.8" r="3" fill="currentColor" stroke="none" />
    </svg>
  );
}

const NUM = "text-[105px] leading-[120px] font-semibold tracking-[-0.3px] text-[#1c253b]";
const HEADING = "font-['Inter',sans-serif] text-[54px] leading-[72px] tracking-[1.95px] whitespace-nowrap text-[#454c57]";

export default function App() {
  return (
    <div className="flex h-[1815px] w-[3840px] overflow-hidden bg-[#e4e8eb] font-['Open_Sans',sans-serif] text-[#454c57]">
      <div className="flex h-full w-[3789px] flex-col">
        <header className="relative z-10 flex h-[183px] shrink-0 border-t-[3px] border-[#68789d] bg-[#1c253b]">
          <div className="w-[953px] border-r-[6px] border-[#62bfd2] pt-[24px] pl-[60px] whitespace-nowrap">
            <div className="text-[48px] leading-[60px] font-extrabold text-[#d62648]">STATE OF DELAWARE</div>
            <div className="text-[48px] leading-[60px] font-semibold text-[#fdfaf6]">Population: 974,051</div>
          </div>
          <nav className="grid flex-1 grid-cols-5 text-center text-[54px] leading-[180px] font-semibold tracking-[1.5px] text-[#62bfd2]">
            <a className="text-white">Overview</a>
            <a className="border-l-[3px] border-[#68789d]">Testing</a>
            <a className="border-l-[3px] border-[#68789d]">Cases</a>
            <a className="border-l-[3px] border-[#68789d]">Outcomes</a>
            <a className="border-l-[3px] border-[#68789d]">Mitigation</a>
          </nav>
        </header>

        <main className="flex h-[1632px] gap-[60px] pl-[215px]">
          <div className="h-full w-[1365px] shrink-0 shadow-[0_0_18px_rgba(60,75,110,0.14)]">
            <DelawareMap />
          </div>

          <div className="flex w-[1935px] flex-col gap-[60px]">
            <section className="flex h-[399px] shrink-0 flex-col justify-between bg-[#f8fafc] px-[60px] pb-[59px] shadow-[0_3px_18px_rgba(60,75,90,0.16)]">
              <div className="grid grid-cols-3 gap-[60px] text-center text-[42px] leading-[60px] font-semibold">
                <div>
                  <div className={`-mt-[61px] ${NUM}`}>128,631</div>
                  <div className="mt-[5px]">Tested Negative</div>
                </div>
                <div>
                  <div className="-mt-[51px]">Current Hospitalizations</div>
                  <div className={`mt-[49px] ${NUM}`}>10</div>
                  <div className="mt-[3px] text-[39px] tracking-[-0.75px] whitespace-nowrap text-[#6c757d] italic">Current Critical Hospitalizations</div>
                </div>
                <div>
                  <div className={`-mt-[61px] ${NUM}`}>7,184</div>
                  <div className="mt-[5px]">Recoveries</div>
                </div>
              </div>
              <div className="grid grid-cols-3 justify-items-center gap-[60px]">
                <Link>See All Tests</Link>
                <Link>See All Cases</Link>
                <Link>See All Outcomes</Link>
              </div>
            </section>

            <section className="h-[1300px] shrink-0 bg-[#f8fafc] px-[60px] pt-[59px] shadow-[0_3px_18px_rgba(60,75,90,0.16)]">
              <h2 className={HEADING}>Positive Cases in State of Delaware</h2>
              <div className="mt-[55px] text-[48px] leading-[66px] font-semibold">Total Positive Cases</div>
              <div className="mt-[10px] text-[144px] leading-[150px] font-semibold tracking-[-0.4px] text-[#1c253b]">12,969</div>
              <div className="mt-[11px] text-[39px] leading-[60px] font-semibold text-[#6c7683]">136.0 per 10,000 people</div>

              <div className="mt-[119px] grid grid-cols-3 items-end gap-x-[60px] text-[42px] leading-[54px] font-semibold tracking-[-0.8px] italic">
                <div className="flex items-center">
                  Confirmed
                  <Help />
                </div>
                <div className="flex items-center">
                  Probable
                  <Help />
                </div>
                <div>Residents of Long-Term Care Facilities</div>
              </div>
              <div className={`mt-[7px] grid grid-cols-3 gap-x-[60px] ${NUM}`}>
                <div>11,989</div>
                <div>980</div>
                <div>1,156</div>
              </div>

              <h2 className={`mt-[127px] ${HEADING}`}>Positive Cases by County</h2>
              <div className="mt-[58px] grid grid-cols-3 gap-x-[60px]">
                <Link>New Castle County</Link>
                <Link>Kent County</Link>
                <Link>Sussex County</Link>
              </div>
              <div className="grid grid-cols-3 gap-x-[60px] text-[105px] leading-[102px] font-semibold tracking-[-0.3px] text-[#1c253b]">
                <div>5,869</div>
                <div>1,867</div>
                <div>5,180</div>
              </div>
            </section>
          </div>
        </main>
      </div>

      <div className="flex h-full w-[51px] flex-col items-center bg-[#f1f1f1] pt-[20px] pb-[20px] text-[#505050]">
        <svg className="h-[13px] w-[25px]" viewBox="0 0 25 13" fill="currentColor">
          <path d="M0 13 12.5 0 25 13Z" />
        </svg>
        <div className="mt-[291px] h-[59px] w-[47px] bg-[#c1c1c1]" />
        <svg className="mt-auto h-[13px] w-[25px]" viewBox="0 0 25 13" fill="currentColor">
          <path d="M0 0 25 0 12.5 13Z" />
        </svg>
      </div>
    </div>
  );
}
